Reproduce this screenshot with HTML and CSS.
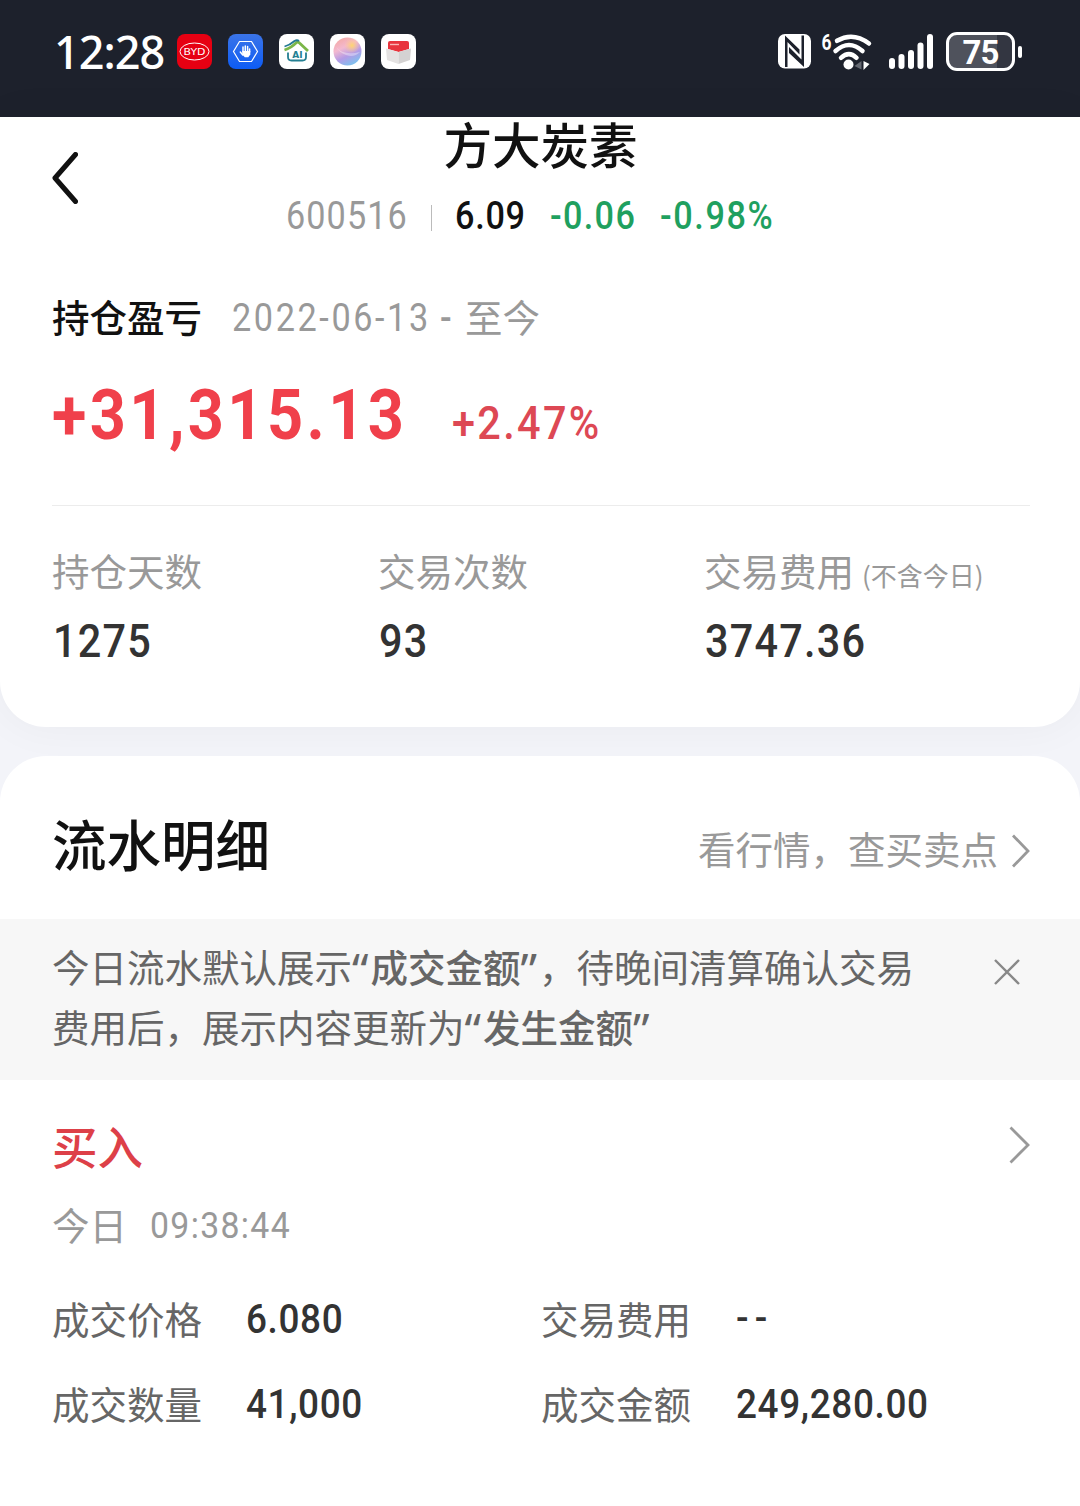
FILE: index.html
```html
<!DOCTYPE html>
<html lang="zh-CN">
<head>
<meta charset="utf-8">
<title>方大炭素</title>
<link rel="stylesheet" href="styles.css">
</head>
<body>
<header class="status">
  <div class="status-left">
    <span class="clock">12:28</span>
    <svg class="app" viewBox="0 0 35 35"><rect width="35" height="35" rx="8" fill="#e60012"/><ellipse cx="17.5" cy="17.5" rx="14.5" ry="8.5" fill="none" stroke="#fff" stroke-width="1"/><text x="17.5" y="20.5" text-anchor="middle" textLength="22" lengthAdjust="spacingAndGlyphs" class="byd">BYD</text></svg>
    <svg class="app" viewBox="0 0 35 35"><defs><linearGradient id="blue" x2="0" y2="1"><stop stop-color="#3b74e8"/><stop offset="1" stop-color="#0d5cf5"/></linearGradient></defs><rect width="35" height="35" rx="8" fill="url(#blue)"/><path d="M11.500 7.500h12l6 10-6 10h-12l-6-10z" fill="none" stroke="#fff" stroke-width="1.200"/><path d="M15 18v-5M17.300 18v-6M19.600 18v-5.400M21.600 18v-3M12.300 18l2.500 3" fill="none" stroke="#fff" stroke-width="1.500" stroke-linecap="round"/><path d="M14.300 17h8v3.500l-2 2.800h-3.500l-2.500-2.800z" fill="#fff"/></svg>
    <svg class="app" viewBox="0 0 35 35"><rect width="35" height="35" rx="8" fill="#fff"/><path d="M5.500 16Q12 14 17.500 8.500q1.500-1 3 .5L29 17" fill="none" stroke="#7ab648" stroke-width="2.800"/><path d="M5.500 12.500Q11 11 15.500 7q2.500-1.500 4.500 0" fill="none" stroke="#247a94" stroke-width="1.800"/><path d="M9 18.500v4.500q0 3.500 3.500 3.500h11q3.500 0 3.500-3.500v-4.500" fill="none" stroke="#247f92" stroke-width="1.800"/><text x="18.500" y="23.500" text-anchor="middle" class="ai">AI</text></svg>
    <svg class="app" viewBox="0 0 35 35"><defs><linearGradient id="orb" x1=".2" x2=".7" y2="1"><stop stop-color="#f4a9a3"/><stop offset=".35" stop-color="#f3b9d0"/><stop offset=".65" stop-color="#b39be6"/><stop offset="1" stop-color="#79c5ef"/></linearGradient><radialGradient id="sun"><stop stop-color="#ffd66e"/><stop offset="1" stop-color="#ffc59a" stop-opacity="0"/></radialGradient></defs><rect width="35" height="35" rx="8" fill="#fff"/><circle cx="17.500" cy="17.500" r="14" fill="url(#orb)"/><circle cx="22" cy="11.500" r="8" fill="url(#sun)"/><path d="M6 13q7 9 24 5-6 6-14 3-7-3-10-8z" fill="#fff" opacity=".35"/></svg>
    <svg class="app" viewBox="0 0 35 35"><rect width="35" height="35" rx="8" fill="#fff"/><path d="M7 9q0-2 2-2h17q2 0 2 2v6l-10.500 3L7 15z" fill="#e8343d"/><path d="M9 10.500h9" stroke="#f9b5b5" stroke-width="1.400"/><path d="M5 14.500l12.500 3.500v12L6 26z" fill="#e4e2e2"/><path d="M30 14.500l-12.500 3.500v12L29 26z" fill="#d4d2d2"/></svg>
  </div>
  <div class="status-right">
    <svg class="nfc" viewBox="0 0 33 35"><rect width="33" height="34.500" rx="7" fill="#fff"/><path d="M7 1.500L21.500 15.500V20.500L9.500 8V33H7zM26 33L11 19V13L23.500 25.500V1.500H26z" fill="#1d212c"/></svg>
    <svg class="wifi" viewBox="0 0 52 40"><text x=".5" y="17.500" textLength="10" lengthAdjust="spacingAndGlyphs" class="six">6</text><g fill="none" stroke="#fff" stroke-width="4.500" stroke-linecap="round"><path d="M16 8.800Q32-.5 48 11.500M14.500 19Q28 7 41.500 19M20 25.800Q28 18.500 35.500 25.800"/></g><circle cx="27.500" cy="32.500" r="5" fill="#fff"/><path d="M40.500 29v8.500l-7-3.500z" fill="#656972"/><path d="M42.500 29v9l6-6z" fill="#fff"/></svg>
    <svg class="signal" viewBox="0 0 44 35" fill="#fff"><rect x="0" y="24" width="6" height="11" rx="3"/><rect x="9.500" y="20" width="6" height="15" rx="3"/><rect x="19" y="16" width="6" height="19" rx="3"/><rect x="28.500" y="8.500" width="6" height="26.500" rx="3"/><rect x="38" y="0" width="6" height="35" rx="3"/></svg>
    <span class="battery">75</span><span class="battery-tip"></span>
  </div>
</header>

<main>
  <section class="card summary">
    <div class="nav">
      <svg class="back" viewBox="0 0 26 52"><path d="M23.500 2.500L3 26l20.500 23.500" fill="none" stroke="#111" stroke-width="5" stroke-linecap="round" stroke-linejoin="round"/></svg>
      <h1>方大炭素</h1>
      <div class="quote"><span class="num code">600516</span><i class="sep"></i><span class="num price">6.09</span><span class="num down chg">-0.06</span><span class="num down pct">-0.98%</span></div>
    </div>
    <div class="period"><span class="period-name">持仓盈亏</span><span class="num date">2022-06-13</span><span class="num to">-</span><span class="now">至今</span></div>
    <div class="profit"><span class="num profit-amount">+31,315.13</span><span class="num profit-rate">+2.47%</span></div>
    <dl class="stats">
      <div><dt>持仓天数</dt><dd class="num">1275</dd></div>
      <div><dt>交易次数</dt><dd class="num">93</dd></div>
      <div><dt>交易费用<small>(不含今日)</small></dt><dd class="num">3747.36</dd></div>
    </dl>
  </section>

  <section class="card flow">
    <div class="flow-head">
      <h2>流水明细</h2>
      <a class="market"><span>看行情，查买卖点</span><svg class="arrow" viewBox="0 0 18 34"><path d="M1 1.500l15 15.500L1 32.500" fill="none" stroke="#999" stroke-width="2.800"/></svg></a>
    </div>
    <div class="notice">
      <p>今日流水默认展示<q>“</q><b>成交金额</b><q>”</q>，待晚间清算确认交易<br>费用后，展示内容更新为<q>“</q><b>发生金额</b><q>”</q></p>
      <svg class="close" viewBox="0 0 26 26"><path d="M1 1l24 24M25 1L1 25" stroke="#888" stroke-width="2.400"/></svg>
    </div>
    <article class="trade">
      <div class="trade-head"><h3>买入</h3><svg class="arrow large" viewBox="0 0 21 38"><path d="M1.500 1.500L19 19 1.500 36.500" fill="none" stroke="#999" stroke-width="2.800"/></svg></div>
      <div class="trade-time"><span>今日</span><span class="num time">09:38:44</span></div>
      <dl class="trade-grid">
        <dt>成交价格</dt><dd class="num">6.080</dd><dt>交易费用</dt><dd class="num dash">--</dd>
        <dt>成交数量</dt><dd class="num">41,000</dd><dt>成交金额</dt><dd class="num">249,280.00</dd>
      </dl>
    </article>
  </section>
</main>
</body>
</html>
```
FILE: styles.css
```css
* { box-sizing: border-box; margin: 0; padding: 0; }
body {
  width: 1080px; height: 1506px; overflow: hidden;
  background: #f3f4f9; color: #111;
  font-family: "Noto Sans CJK SC", sans-serif; font-size: 37.5px;
}
svg { display: block; flex: none; }
/* narrow figures with open spacing */
.num {
  font-family: Roboto, sans-serif; font-weight: 500; white-space: nowrap;
  transform: scaleX(.9); transform-origin: 0 50%;
}

.status {
  height: 117px; padding: 0 58px 14px 54px; background: #1d212c; color: #fff;
  display: flex; justify-content: space-between; align-items: center;
}
.status-left, .status-right { display: flex; align-items: center; }
.clock { width: 123px; padding-top: 1px; font: 550 45px/50px "Noto Sans", sans-serif; letter-spacing: -1px; }
.app { width: 35px; height: 35px; margin-right: 16px; }
.byd { font: 400 8px "DejaVu Sans", sans-serif; fill: #fff; }
.ai { font: 700 9px "DejaVu Sans", sans-serif; fill: #247f92; }
.nfc { width: 33px; height: 35px; margin-right: 10px; }
.wifi { width: 52px; height: 40px; margin-right: 16px; overflow: visible; }
.six { font: 700 22px Roboto, sans-serif; fill: #fff; }
.signal { width: 44px; height: 35px; margin-right: 13px; }
.battery {
  width: 69px; height: 39px; border: 3px solid #fff; border-radius: 11px;
  background: linear-gradient(90deg, #4f525c 76%, #333641 76%);
  font: 700 33px/35px Roboto, sans-serif; text-align: center; letter-spacing: -1px;
}
.battery-tip { width: 4px; height: 12px; margin-left: 3px; border-radius: 2px; background: #fff; }

.card { background: #fff; }
.summary {
  height: 610px; padding: 0 50px 0 52px; border-radius: 0 0 46px 46px;
  box-shadow: 0 0 45px rgba(0, 0, 0, .045);
}
.nav {
  height: 163px; display: grid; grid-template: 54px 86px / 27px 1fr;
  align-items: center;
}
.back { width: 26px; height: 52px; grid-row: 1 / 3; margin-top: -18px; }
.nav h1 { font-size: 48.500px; font-weight: 500; line-height: 54px; text-align: center; margin: -2px 28px 0 0; }
.quote { display: flex; align-items: center; padding: 4px 0 0 207px; font-size: 38px; line-height: 44px; }
.code { width: 145px; color: #999; font-weight: 400; letter-spacing: 1.2px; }
.sep { width: 1px; height: 26px; margin: 3px 23px 0 0; background: #bbb; }
.price { width: 95px; letter-spacing: .8px; }
.down { color: #1fa05f; }
.chg { width: 110px; letter-spacing: 1.5px; }
.pct { letter-spacing: 1.8px; }

.period { height: 72px; margin-bottom: 4px; display: flex; align-items: center; line-height: 72px; color: #999; }
.period-name { width: 180px; font-weight: 500; color: #111; }
.date { width: 208px; font-size: 38px; font-weight: 400; letter-spacing: 2.900px; padding-top: 4px; }
.to { width: 25px; font-size: 38px; padding-top: 4px; }
.profit {
  height: 150px; padding-top: 18px; border-bottom: 1px solid #ececec; color: #f0404b;
  display: flex; align-items: baseline;
}
.profit-amount { width: 400px; font-size: 70px; font-weight: 700; line-height: 82px; letter-spacing: 3.8px; }
.profit-rate { font-size: 46px; color: #dd4854; letter-spacing: 2.6px; }
.stats { display: grid; grid-template-columns: repeat(3, 326px); padding-top: 34px; }
.stats dt { height: 60px; color: #999; line-height: 60px; white-space: nowrap; }
.stats small { margin-left: 8px; font-size: 26px; }
.stats dd { margin-top: 11px; padding-left: 1px; font-size: 46px; line-height: 60px; color: #333; letter-spacing: 1.4px; }

.flow { height: 750px; margin-top: 29px; border-radius: 46px 46px 0 0; }
.flow-head { height: 163px; padding: 10px 50px 0 52px; display: flex; align-items: center; justify-content: space-between; }
.flow h2 { font-size: 54.500px; font-weight: 500; }
.market { display: flex; align-items: center; gap: 14px; color: #999; margin-top: 10px; }
.market .arrow { margin-top: 6px; }
.arrow { width: 18px; height: 34px; }
.notice {
  height: 161px; padding: 17px 60px 0 52px; background: #f7f7f7; color: #666;
  display: flex; justify-content: space-between; line-height: 60px;
}
.notice p { white-space: nowrap; }
.notice b { font-weight: 500; }
.notice q { quotes: none; font: 46px/0 "Noto Sans", sans-serif; vertical-align: -5px; letter-spacing: 2px; }
.notice q::before, .notice q::after { content: none; }
.close { width: 26px; height: 26px; margin-top: 23px; }
.trade { padding: 34px 50px 0 52px; }
.trade-head { height: 62px; display: flex; align-items: center; justify-content: space-between; }
.trade h3 { font-size: 45.500px; line-height: 62px; font-weight: 500; color: #dd4048; }
.large { width: 21px; height: 38px; }
.trade-time { margin-top: 16px; display: flex; align-items: center; line-height: 60px; color: #999; }
.trade-time span:first-child { width: 98px; }
.trade-time .time { font-weight: 400; letter-spacing: 1.5px; padding-top: 3px; }
.trade-grid { margin-top: 20px; display: grid; grid-template: 85px 85px / 194px 295px 195px 1fr; align-items: center; color: #666; }
.trade-grid dd { padding-top: 2px; font-size: 41px; color: #333; letter-spacing: .7px; }
.trade-grid .dash { letter-spacing: 7px; padding: 0; }
```
